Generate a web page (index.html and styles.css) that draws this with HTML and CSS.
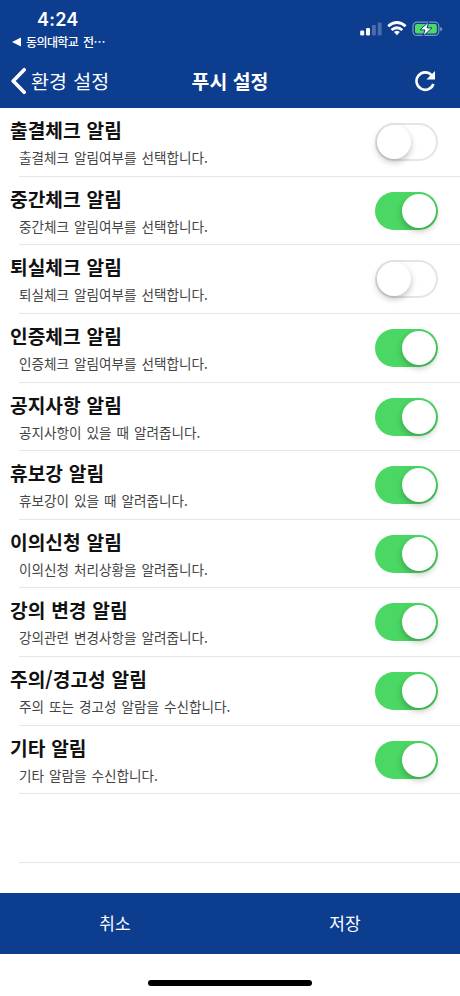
FILE: index.html
```html
<!DOCTYPE html>
<html lang="ko">
<head>
<meta charset="utf-8">
<meta name="viewport" content="width=device-width, initial-scale=1">
<title>푸시 설정</title>
<link rel="stylesheet" href="styles.css">
</head>
<body>
<div class="screen">
  <header class="header">
    <div class="status">
      <div class="status-left">
        <div class="time">4:24</div>
        <div class="return-app"><svg width="10" height="10" viewBox="0 0 10 10"><path d="M0 5 9 0.5V9.5Z" fill="#fff"/></svg><span>동의대학교 전⋯</span></div>
      </div>
      <svg class="status-icons" width="84" height="18" viewBox="0 0 84 18">
        <g fill="#fff">
          <rect x="0.2" y="10.5" width="4" height="5" rx="1.2"/>
          <rect x="6" y="8" width="4" height="7.5" rx="1.2"/>
          <g opacity="0.25"><rect x="12" y="5" width="3.8" height="10.5" rx="1.2"/><rect x="17.8" y="2.5" width="3.8" height="13" rx="1.2"/></g>
        </g>
        <g fill="none" stroke="#fff" stroke-width="2.8">
          <path d="M28.2 6.3Q36.9-1.2 45.6 6.3"/>
          <path d="M31.5 10Q36.9 5.4 42.3 10"/>
        </g>
        <path d="M34 12Q36.9 9.7 39.8 12L36.9 15.3Z" fill="#fff"/>
        <rect x="53" y="2.2" width="25.8" height="13.2" rx="4" fill="none" stroke="#7996c8" stroke-width="1.2"/>
        <path d="M80.2 7Q82.3 7.4 82.3 9.1T80.2 11.2Z" fill="#7996c8"/>
        <rect x="55" y="4.1" width="21.8" height="9.4" rx="2" fill="#4cdb62"/>
        <path d="M68.8 1.8 60 9.9H64.9L63 16.2 72 7.9H67Z" fill="#fff" stroke="#0d3d8f" stroke-width="1"/>
      </svg>
    </div>
    <nav class="nav">
      <div class="back">
        <svg width="16" height="28" viewBox="0 0 16 28"><path d="M13.2 2.7 2.2 14 13.2 25.3" fill="none" stroke="#fff" stroke-width="3.6" stroke-linecap="round" stroke-linejoin="round"/></svg>
        <span>환경 설정</span>
      </div>
      <h1>푸시 설정</h1>
      <svg class="refresh" width="22" height="22" viewBox="0 0 22 22"><path d="M17.7 5.3A8.7 8.7 0 1 0 19.4 14" fill="none" stroke="#fff" stroke-width="2.6"/><path d="M21 1V9.6H12.4Z" fill="#fff"/></svg>
    </nav>
  </header>
  <main class="list">
    <section class="row"><div class="label"><h2>출결체크 알림</h2><p>출결체크 알림여부를 선택합니다.</p></div><span class="switch"><i></i></span></section>
    <section class="row"><div class="label"><h2>중간체크 알림</h2><p>중간체크 알림여부를 선택합니다.</p></div><span class="switch on"><i></i></span></section>
    <section class="row"><div class="label"><h2>퇴실체크 알림</h2><p>퇴실체크 알림여부를 선택합니다.</p></div><span class="switch"><i></i></span></section>
    <section class="row"><div class="label"><h2>인증체크 알림</h2><p>인증체크 알림여부를 선택합니다.</p></div><span class="switch on"><i></i></span></section>
    <section class="row"><div class="label"><h2>공지사항 알림</h2><p>공지사항이 있을 때 알려줍니다.</p></div><span class="switch on"><i></i></span></section>
    <section class="row"><div class="label"><h2>휴보강 알림</h2><p>휴보강이 있을 때 알려줍니다.</p></div><span class="switch on"><i></i></span></section>
    <section class="row"><div class="label"><h2>이의신청 알림</h2><p>이의신청 처리상황을 알려줍니다.</p></div><span class="switch on"><i></i></span></section>
    <section class="row"><div class="label"><h2>강의 변경 알림</h2><p>강의관련 변경사항을 알려줍니다.</p></div><span class="switch on"><i></i></span></section>
    <section class="row"><div class="label"><h2>주의/경고성 알림</h2><p>주의 또는 경고성 알람을 수신합니다.</p></div><span class="switch on"><i></i></span></section>
    <section class="row"><div class="label"><h2>기타 알림</h2><p>기타 알람을 수신합니다.</p></div><span class="switch on"><i></i></span></section>
    <section class="row"></section>
  </main>
  <footer class="actions"><span>취소</span><span>저장</span></footer>
  <div class="home"><div class="home-bar"></div></div>
</div>
</body>
</html>
```
FILE: styles.css
```css
* { box-sizing: border-box; }
body {
  margin: 0;
  background: #fff;
  font-family: "Noto Sans CJK KR", sans-serif;
}
h1, h2, p { margin: 0; white-space: nowrap; }
svg { display: block; flex: none; }
.screen {
  width: 460px;
  height: 996px;
  display: flex;
  flex-direction: column;
  overflow: hidden;
}
.header {
  height: 108px;
  flex: none;
  background: #0d3d8f;
  color: #fff;
}
.status {
  height: 54px;
  display: flex;
  justify-content: space-between;
  padding: 10px 16px 0 12px;
}
.time {
  padding-left: 25px;
  font: 600 18px/20px Inter, sans-serif;
  letter-spacing: 0.2px;
}
.return-app {
  display: flex;
  align-items: center;
  gap: 4px;
  margin-top: 3px;
  font-size: 12px;
  font-weight: 500;
  line-height: 18px;
  letter-spacing: -0.6px;
  word-spacing: 2px;
  white-space: nowrap;
}
.status-icons { margin-top: 10px; }
.nav {
  height: 54px;
  display: grid;
  grid-template-columns: 1fr auto 1fr;
  align-items: center;
  padding: 0 24px 0 11px;
}
.back {
  display: flex;
  align-items: center;
  gap: 4px;
  font-size: 19.5px;
  line-height: 28px;
  word-spacing: 1px;
  white-space: nowrap;
}
.nav h1 {
  margin-left: 13px;
  font-size: 19.4px;
  font-weight: 700;
  line-height: 28px;
}
.refresh { justify-self: end; }
.list { height: 785px; flex: none; }
.row {
  height: 68.65px;
  display: flex;
  justify-content: space-between;
  padding: 8px 22px 0 10px;
  background: linear-gradient(#e6e6e6, #e6e6e6) 19px 100% / 100% 1px no-repeat;
}
.row h2 {
  font-size: 19.2px;
  font-weight: 700;
  line-height: 28px;
  color: #111;
  word-spacing: 0.5px;
}
.row p {
  padding-left: 9px;
  font-size: 13.6px;
  font-weight: 400;
  line-height: 20px;
  margin-top: 3px;
  color: #444;
  word-spacing: 1.2px;
}
.switch {
  width: 63px;
  height: 38px;
  margin-top: 7px;
  padding: 2px;
  border-radius: 19px;
  display: flex;
  background: #fff;
  box-shadow: inset 0 0 0 2px #e5e5e5;
}
.switch i {
  width: 34px;
  height: 34px;
  border-radius: 50%;
  background: #fff;
  box-shadow: 0 3px 6px rgba(0, 0, 0, 0.25);
}
.switch.on {
  justify-content: flex-end;
  background: #4bd763;
  box-shadow: none;
}
.actions {
  height: 61px;
  flex: none;
  display: grid;
  grid-template-columns: 1fr 1fr;
  align-items: center;
  padding-bottom: 2px;
  text-align: center;
  background: #0d3d8f;
  color: #fff;
  font-size: 17px;
  line-height: 24px;
}
.home {
  flex: 1;
  display: flex;
  justify-content: center;
  align-items: flex-start;
  padding-top: 26px;
}
.home-bar {
  width: 164px;
  height: 6px;
  border-radius: 3px;
  background: #000;
}
```
